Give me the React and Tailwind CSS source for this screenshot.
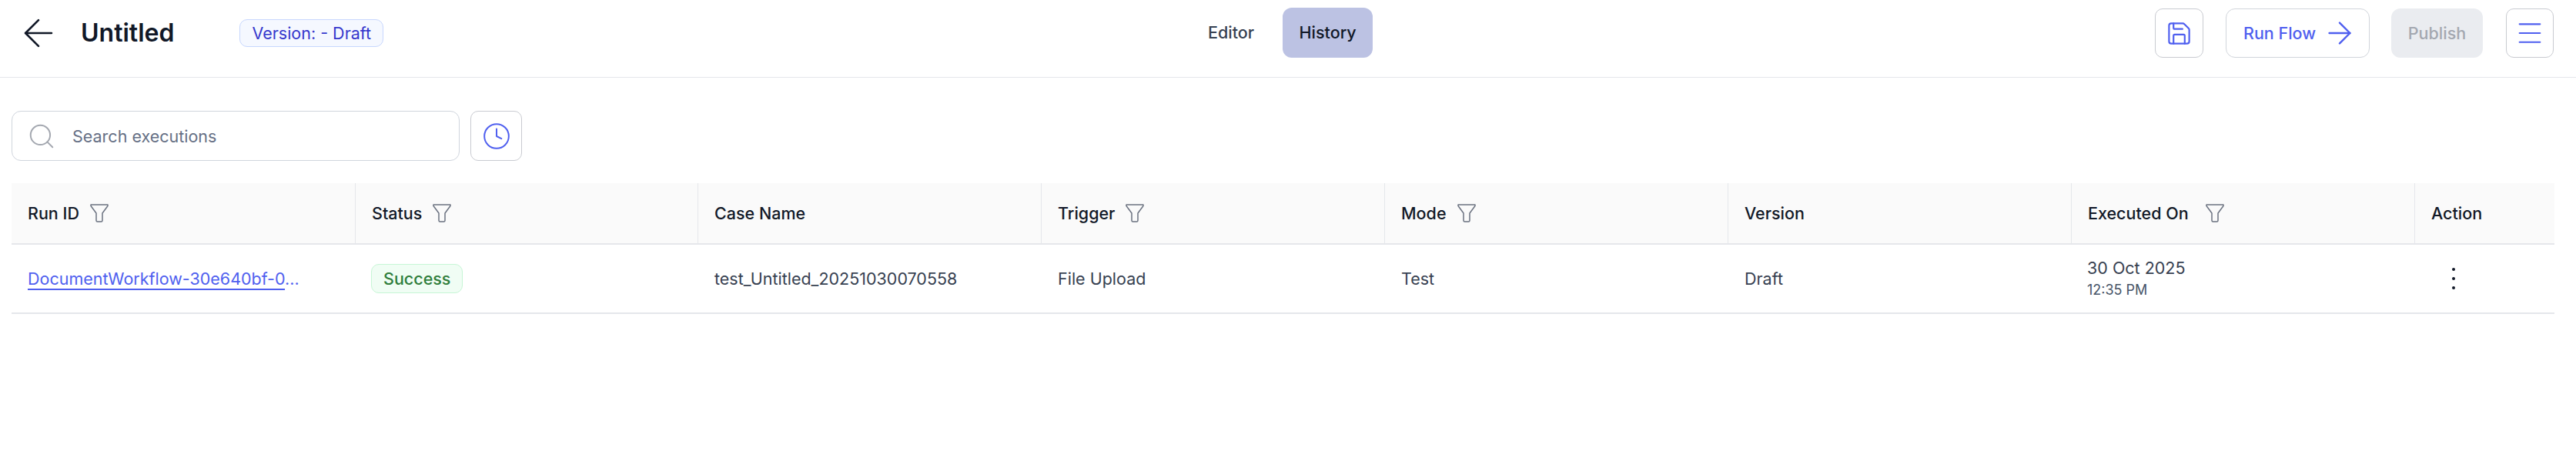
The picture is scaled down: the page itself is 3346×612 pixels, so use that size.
import { ArrowLeft, ArrowRight, Clock, Menu, Save, Search } from "lucide-react";

const COLUMNS = [
  { label: "Run ID", filter: true },
  { label: "Status", filter: true },
  { label: "Case Name" },
  { label: "Trigger", filter: true },
  { label: "Mode", filter: true },
  { label: "Version" },
  { label: "Executed On", filter: true, wide: true },
  { label: "Action" },
];

function FilterIcon({ className }) {
  return (
    <svg viewBox="0 0 24 24" fill="none" stroke="#6b7280" strokeWidth="1.5" strokeLinejoin="round" className={className}>
      <path d="M1 1h22v1.5L16 12v9.5a1.5 1.5 0 0 1-1.5 1.5h-5A1.5 1.5 0 0 1 8 21.5V12L1 2.5z" />
    </svg>
  );
}

function Header() {
  return (
    <header className="h-[101px] border-b border-[#e5e7eb] flex items-start">
      <div className="flex items-center h-[86px] w-[1569px]">
        <ArrowLeft className="ml-[21px] size-[58px] text-[#111827]" strokeWidth={1.1} />
        <h1 className="ml-[26px] text-[32px] leading-none font-semibold text-[#111827]">Untitled</h1>
        <span className="ml-[85px] h-[36px] px-[15px] flex items-center rounded-[10px] border border-[#c7d7fe] bg-[#f5f8ff] text-[21.5px] text-[#3538cd]">
          Version: - Draft
        </span>
      </div>
      <div className="flex items-center gap-[37px] mt-[10px] h-[65px]">
        <span className="text-[21.5px] font-medium text-[#374151]">Editor</span>
        <span className="h-[65px] w-[117px] flex items-center justify-center rounded-[12px] bg-[#bcc2e3] text-[21.5px] font-medium text-[#111827]">
          History
        </span>
      </div>
      <div className="ml-auto flex items-center mt-[11px] mr-[29px] h-[64px]">
        <button className="w-[63px] h-[64px] flex items-center justify-center rounded-[10px] border border-[#c9cbd1] text-[#4f5fef]">
          <Save className="size-[35px]" strokeWidth={1.5} />
        </button>
        <button className="ml-[29px] h-[64px] w-[187px] flex items-center pl-[22px] gap-[8px] rounded-[12px] border border-[#d1d5db] text-[21.5px] font-medium text-[#4f5fef]">
          Run Flow
          <ArrowRight className="size-[46px]" strokeWidth={1.25} />
        </button>
        <button className="ml-[28px] h-[64px] w-[119px] flex items-center justify-center rounded-[12px] bg-[#eaecf0] text-[21.5px] font-medium text-[#a4a8b0]">
          Publish
        </button>
        <button className="ml-[30px] w-[62px] h-[64px] flex items-center justify-center rounded-[10px] border border-[#c9cbd1] text-[#4f5fef]">
          <Menu className="size-[40px]" strokeWidth={1.25} />
        </button>
      </div>
    </header>
  );
}

function Toolbar() {
  return (
    <div className="flex items-center gap-[14px] mt-[43px] ml-[15px] h-[65px]">
      <div className="w-[582px] h-[65px] flex items-center rounded-[12px] border border-[#d0d5dd] pl-[19px] gap-[21px]">
        <Search className="size-[38px] text-[#a4a8b0]" strokeWidth={1.25} />
        <span className="mt-[1px] text-[21.5px] text-[#667085]">Search executions</span>
      </div>
      <button className="w-[67px] h-[65px] flex items-center justify-center rounded-[10px] border border-[#c9cbd1] text-[#4f5fef]">
        <Clock className="size-[38px]" strokeWidth={1.25} />
      </button>
    </div>
  );
}

function ExecutionsTable() {
  return (
    <div className="mt-[29px] ml-[15px] mr-[28px] text-[21.5px]">
      <div className="grid grid-cols-[447px_445px_446px_446px_446px_446px_446px_1fr] h-[80px] bg-[#fafafa] border-b-2 border-[#e5e7eb]">
        {COLUMNS.map((col, i) => (
          <div
            key={col.label}
            className={`flex items-center pl-[21px] font-medium text-[#111827] ${i < 7 ? "border-r border-[#e5e7eb]" : ""}`}
          >
            {col.label}
            {col.filter && (
              <FilterIcon className={`size-[24px] ${col.wide ? "ml-[22px]" : "ml-[14px]"}`} />
            )}
          </div>
        ))}
      </div>
      <div className="grid grid-cols-[447px_445px_446px_446px_446px_446px_446px_1fr] h-[90px] items-center border-b-2 border-[#e5e7eb] text-[#374151]">
        <div className="pl-[21px]">
          <a className="text-[#4f5fef]">
            <span className="underline decoration-2 underline-offset-[5px]">DocumentWorkflow-30e640bf-0</span>...
          </a>
        </div>
        <div className="pl-[20px]">
          <span className="inline-flex items-center h-[38px] px-[15px] rounded-[10px] border border-[#c6f6d5] bg-[#f0fdf4] font-medium text-[#2f7d3b]">
            Success
          </span>
        </div>
        <div className="pl-[21px]">test_Untitled_20251030070558</div>
        <div className="pl-[21px]">File Upload</div>
        <div className="pl-[21px]">Test</div>
        <div className="pl-[21px]">Draft</div>
        <div className="pl-[20px] flex flex-col">
          <span className="leading-[30px]">30 Oct 2025</span>
          <span className="text-[18px] leading-[28px] text-[#475467]">12:35 PM</span>
        </div>
        <div className="pl-[48px] flex flex-col gap-[8px] items-start">
          <span className="size-[4px] rounded-full bg-[#111827]" />
          <span className="size-[4px] rounded-full bg-[#111827]" />
          <span className="size-[4px] rounded-full bg-[#111827]" />
        </div>
      </div>
    </div>
  );
}

export default function App() {
  return (
    <div className="w-[3346px] h-[612px] bg-white overflow-hidden font-['Inter',sans-serif]">
      <Header />
      <Toolbar />
      <ExecutionsTable />
    </div>
  );
}
